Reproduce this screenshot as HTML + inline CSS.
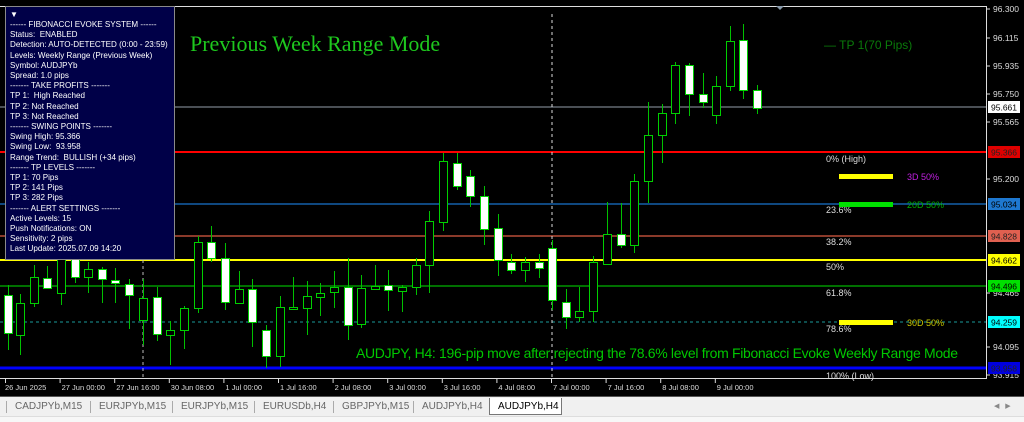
<!DOCTYPE html>
<html><head><meta charset="utf-8"><style>
body{margin:0;width:1024px;height:420px;overflow:hidden;background:#000;font-family:"Liberation Sans",sans-serif}
#c{position:absolute;left:0;top:0}
.t{position:absolute;white-space:nowrap}
#panel{position:absolute;left:5px;top:6px;width:170px;height:254px;background:#000048;border:1px solid #8a8a8a;box-sizing:border-box;color:#fff;font-size:8.1px;line-height:10.2px;padding:3px 0 0 4px;overflow:hidden}
#tabs{position:absolute;left:0;top:396px;width:1024px;height:24px;background:#f0f0f0;border-top:1px solid #555;font-size:10px;color:#666}
</style></head><body>
<svg id="c" width="1024" height="420" xmlns="http://www.w3.org/2000/svg"></svg>
<div id="panel"><div style="height:10px">▼</div>------ FIBONACCI EVOKE SYSTEM ------<br>Status:&nbsp; ENABLED<br>Detection: AUTO-DETECTED (0:00 - 23:59)<br>Levels: Weekly Range (Previous Week)<br>Symbol: AUDJPYb<br>Spread: 1.0 pips<br>------- TAKE PROFITS -------<br>TP 1:&nbsp; High Reached<br>TP 2: Not Reached<br>TP 3: Not Reached<br>------- SWING POINTS -------<br>Swing High: 95.366<br>Swing Low:&nbsp; 93.958<br>Range Trend:&nbsp; BULLISH (+34 pips)<br>------- TP LEVELS -------<br>TP 1: 70 Pips<br>TP 2: 141 Pips<br>TP 3: 282 Pips<br>------- ALERT SETTINGS -------<br>Active Levels: 15<br>Push Notifications: ON<br>Sensitivity: 2 pips<br>Last Update: 2025.07.09 14:20</div>
<div class="t" style="left:190px;top:31px;font:22px 'Liberation Serif',serif;color:#1ec81e">Previous Week Range Mode</div>
<div class="t" style="left:824px;top:38px;font-size:12px;color:#0a7a0a">— TP 1(70 Pips)</div>
<div class="t" style="left:356px;top:345px;font-size:14px;color:#00c800;letter-spacing:-0.32px">AUDJPY, H4: 196-pip move after rejecting the 78.6% level from Fibonacci Evoke Weekly Range Mode</div>
<div id="tabs"></div>
<script>
var s='',svg=document.getElementById('c');
function L(x1,y1,x2,y2,c,w,d){s+='<line x1="'+x1+'" y1="'+y1+'" x2="'+x2+'" y2="'+y2+'" stroke="'+c+'" stroke-width="'+(w||1)+'"'+(d?' stroke-dasharray="'+d+'"':'')+'/>';}
function R(x,y,w,h,f,st){s+='<rect x="'+x+'" y="'+y+'" width="'+w+'" height="'+h+'" fill="'+f+'"'+(st?' stroke="'+st+'"':'')+'/>';}
function T(x,y,t,c,sz,a){s+='<text x="'+x+'" y="'+y+'" fill="'+c+'" font-size="'+(sz||9)+'" font-family="Liberation Sans,sans-serif"'+(a?' text-anchor="'+a+'"':'')+'>'+t+'</text>';}
L(0,107,986,107,'#4a4f55',2);
L(0,152,986,152,'#ff0000',2);
L(0,204,986,204,'#1e90ff',1);
L(0,236,986,236,'#8b3a2a',2);
L(0,260,986,260,'#ffff00',2);
L(0,286,986,286,'#00e000',1);
L(0,322,986,322,'#1a9a9a',1,'3,3');
L(0,368,986,368,'#0000ff',3);
L(143,200,143,378,'#bbb',1,'3,3');L(552,14,552,378,'#ddd',1,'3,3');
var C=[[8,285,295,333,350,1],[20,294,303,335,355,0],[34,265,277,303,307,0],[47,266,278,288,289,1],[61,240,250,293,305,0],[75,250,255,277,283,1],[88,262,269,277,293,0],[102,267,269,279,303,1],[115,268,280,283,303,1],[129,279,284,295,329,1],[143,279,298,320,345,0],[157,287,297,334,341,1],[170,321,330,335,365,0],[184,306,308,330,349,0],[198,236,242,308,313,0],[211,226,242,258,262,1],[225,243,258,302,310,1],[239,271,289,303,304,0],[252,279,289,322,347,1],[266,325,330,356,368,1],[280,296,307,356,367,0],[293,277,307,309,309,0],[307,281,296,308,335,0],[320,283,293,297,316,0],[334,271,287,292,308,0],[348,258,287,325,340,1],[361,275,288,324,328,0],[375,265,286,289,290,0],[388,270,285,290,311,1],[402,285,287,291,312,0],[416,258,265,287,295,0],[429,211,221,265,293,0],[443,153,161,222,231,0],[457,153,163,186,190,1],[470,170,176,196,207,1],[484,186,196,229,245,1],[498,214,228,260,276,1],[511,254,262,270,274,1],[525,257,262,270,282,0],[539,254,262,268,278,1],[552,240,248,300,310,1],[566,289,302,317,329,1],[579,287,311,317,322,0],[593,256,262,311,322,0],[607,202,234,264,265,0],[621,203,234,245,248,1],[634,174,181,245,253,0],[648,102,135,181,203,0],[662,104,113,135,163,0],[675,62,65,113,124,0],[689,63,65,94,116,1],[703,73,94,102,108,1],[716,76,86,115,124,0],[730,26,41,86,91,0],[743,24,40,90,99,1],[757,85,90,108,114,1]];
C.forEach(function(c){L(c[0]+.5,c[1],c[0]+.5,c[4],'#00c000',1);R(c[0]-3.5,c[2]+.5,8,Math.max(1,c[3]-c[2]),c[5]?'#fff':'#000','#00d000');});
var lab=[[826,162,'0% (High)'],[826,213,'23.6%'],[826,245,'38.2%'],[826,270,'50%'],[826,296,'61.8%'],[826,332,'78.6%'],[826,379,'100% (Low)']];
lab.forEach(function(l){T(l[0],l[1],l[2],'#ddd',9);});
R(839,174,54,5,'#ffff00');T(907,180,'3D 50%','#c020e0',9);
R(839,202,54,5,'#00e000');T(907,208,'20D 50%','#00b000',9);
R(839,320,54,5,'#ffff00');T(907,326,'30D 50%','#c8c800',9);
L(0,378.5,987,378.5,'#ddd',1);L(986.5,6,986.5,378,'#ddd',1);L(0,6.5,987,6.5,'#ddd',1);
s+='<polygon points="776,6 784,6 780,10" fill="#8899aa"/>';
[[96.300,12],[96.115,41],[95.935,69],[95.750,97],[95.565,125],[95.200,182],[94.465,296],[94.095,350],[93.915,378]].forEach(function(p){L(987,p[1]-3,990,p[1]-3,'#ddd');T(993,p[1],p[0].toFixed(3),'#ddd',8.5);});
[['95.661',107,'#fff','#000'],['95.366',152,'#e00000','#222'],['95.034',204,'#1e78d0','#000'],['94.828',236,'#e06050','#222'],['94.662',260,'#ffff00','#000'],['94.496',286,'#00e000','#000'],['94.259',322,'#00ffff','#000'],['93.958',368,'#0000e0','#222']].forEach(function(p){R(988,p[1]-6,32,12,p[2]);T(991,p[1]+3.5,p[0],p[3],8.5);});
['26 Jun 2025','27 Jun 00:00','27 Jun 16:00','30 Jun 08:00','1 Jul 00:00','1 Jul 16:00','2 Jul 08:00','3 Jul 00:00','3 Jul 16:00','4 Jul 08:00','7 Jul 00:00','7 Jul 16:00','8 Jul 08:00','9 Jul 00:00'].forEach(function(t,i){var x=5+i*54.6;L(x+.5,379,x+.5,383,'#ddd');T(x+(i?2:0),390,t,'#ddd',7.5);});
svg.innerHTML=s;
var tb=document.getElementById('tabs'),tabs=[['CADJPYb,M15',15],['EURJPYb,M15',99],['EURJPYb,M15',181],['EURUSDb,H4',263],['GBPJPYb,M15',342],['AUDJPYb,H4',422]],h='';
tabs.forEach(function(t,i){h+='<div class="t" style="left:'+t[1]+'px;top:4px">'+t[0]+'</div>';h+='<div class="t" style="left:'+(t[1]-9)+'px;top:4px;width:1px;height:12px;background:#aaa"></div>';});
h+='<div class="t" style="left:489px;top:1px;width:73px;height:17px;background:#fff;border:1px solid #777;border-top:none;box-sizing:border-box;color:#000;padding:3px 0 0 8px">AUDJPYb,H4</div>';
h+='<div class="t" style="left:994px;top:5px;font-size:7px;color:#888">◀&nbsp;&nbsp;&nbsp;▶</div>';
h+='<div class="t" style="left:0;top:19px;width:1024px;height:5px;background:#f7f7f7;border-top:1px solid #ddd"></div>';
tb.innerHTML=h;
</script>
</body></html>
